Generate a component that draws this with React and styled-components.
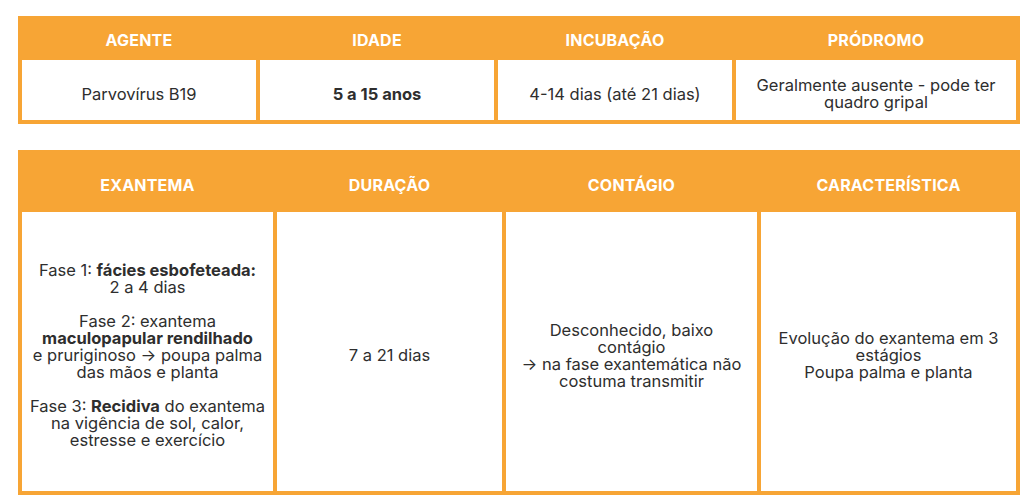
import React from "react";
import styled, { createGlobalStyle } from "styled-components";

const ORANGE = "#F7A535";

const Global = createGlobalStyle`
  html, body { margin: 0; padding: 0; background: #fff; }
  body { font-family: Inter, "Noto Sans", "Liberation Sans", sans-serif; color: #2e2e2e; }
`;

const Page = styled.div`
  display: flex;
  flex-direction: column;
  gap: 26px;
  padding: 16px 4px 0 18px;
  width: 1002px;
`;

const Table = styled.div`
  display: grid;
  grid-template-columns: ${(p) => p.$cols};
  grid-template-rows: ${(p) => p.$rows};
  column-gap: 4px;
  background: ${ORANGE};
  padding: 0 4px 4px 4px;
`;

const Head = styled.div`
  display: flex;
  align-items: center;
  justify-content: center;
  padding-top: ${(p) => p.$offset || 0}px;
  color: #fff;
  font-weight: 700;
  font-size: 16px;
  letter-spacing: 0.2px;
  text-transform: uppercase;
`;

const Cell = styled.div`
  display: flex;
  align-items: center;
  justify-content: center;
  text-align: center;
  background: #fff;
  font-size: 16.5px;
  line-height: 17px;
  padding: ${(p) => p.$offset || 0}px 4px 0 4px;
  font-weight: ${(p) => (p.$bold ? 700 : 400)};
`;

const Block = styled.div`
  display: flex;
  flex-direction: column;
  gap: 17px;
`;

const P = styled.p`
  margin: 0;
`;

export default function App() {
  return (
    <>
      <Global />
      <Page>
        <Table $cols="234px 234px 234px 280px" $rows="44px 60px">
          <Head $offset={4}>Agente</Head>
          <Head $offset={4}>Idade</Head>
          <Head $offset={4}>Incubação</Head>
          <Head $offset={4}>Pródromo</Head>
          <Cell $offset={8}>Parvovírus B19</Cell>
          <Cell $offset={8} $bold>5 a 15 anos</Cell>
          <Cell $offset={8}>4-14 dias (até 21 dias)</Cell>
          <Cell $offset={8}>
            <P>
              Geralmente ausente - pode ter
              <br />
              quadro gripal
            </P>
          </Cell>
        </Table>

        <Table $cols="251px 225px 251px 255px" $rows="62px 279px">
          <Head $offset={8}>Exantema</Head>
          <Head $offset={8}>Duração</Head>
          <Head $offset={8}>Contágio</Head>
          <Head $offset={8}>Característica</Head>
          <Cell $offset={8}>
            <Block>
              <P>
                Fase 1: <b>fácies esbofeteada:</b>
                <br />2 a 4 dias
              </P>
              <P>
                Fase 2: exantema
                <br />
                <b>maculopapular rendilhado</b>
                <br />e pruriginoso → poupa palma
                <br />
                das mãos e planta
              </P>
              <P>
                Fase 3: <b>Recidiva</b> do exantema
                <br />
                na vigência de sol, calor,
                <br />
                estresse e exercício
              </P>
            </Block>
          </Cell>
          <Cell $offset={8}>7 a 21 dias</Cell>
          <Cell $offset={8}>
            <P>
              Desconhecido, baixo
              <br />
              contágio
              <br />→ na fase exantemática não
              <br />
              costuma transmitir
            </P>
          </Cell>
          <Cell $offset={8}>
            <P>
              Evolução do exantema em 3
              <br />
              estágios
              <br />
              Poupa palma e planta
            </P>
          </Cell>
        </Table>
      </Page>
    </>
  );
}
